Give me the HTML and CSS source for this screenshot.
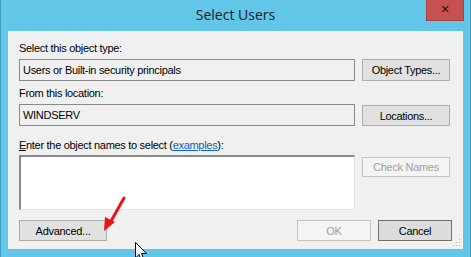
FILE: index.html
```html
<!DOCTYPE html>
<html lang="en">

<head>
    <meta charset="UTF-8">
    <title>Select Users</title>
    <link rel="stylesheet" href="styles.css">
</head>

<body>
    <div class="window">
        <div class="titlebar">
            <span class="title">Select Users</span>
            <button class="close">&#x2715;</button>
        </div>

        <div class="client">
            <div class="label">Select this object type:</div>
            <div class="row">
                <div class="field">Users or Built-in security principals</div>
                <button class="btn">Object Types...</button>
            </div>

            <div class="label gap-sm">From this location:</div>
            <div class="row">
                <div class="field">WINDSERV</div>
                <button class="btn btn-loc">Locations...</button>
            </div>

            <div class="label gap-lg"><u>E</u>nter the object names to select (<a href="#">examples</a>):</div>
            <div class="row">
                <textarea class="names"></textarea>
                <button class="btn btn-check" disabled>Check Names</button>
            </div>

            <div class="footer">
                <button class="btn btn-adv">Advanced...</button>
                <div class="footer-right">
                    <button class="btn btn-ok" disabled>OK</button>
                    <button class="btn btn-cancel">Cancel</button>
                </div>
            </div>

            <!-- size grip -->
            <svg class="grip" width="8" height="8" viewBox="0 0 8 8">
                <rect x="6" y="0" width="1" height="1" fill="#b5b5b5"/>
                <rect x="3" y="3" width="1" height="1" fill="#b5b5b5"/>
                <rect x="6" y="3" width="1" height="1" fill="#b5b5b5"/>
                <rect x="0" y="6" width="1" height="1" fill="#b5b5b5"/>
                <rect x="3" y="6" width="1" height="1" fill="#b5b5b5"/>
                <rect x="6" y="6" width="1" height="1" fill="#b5b5b5"/>
            </svg>
        </div>

        <!-- annotation arrow -->
        <svg class="arrow" width="30" height="40" viewBox="0 0 30 40">
            <line x1="24" y1="2" x2="10" y2="27" stroke="#e8141c" stroke-width="3" stroke-linecap="round"/>
            <polygon points="4,35 5,21 15,26" fill="#e8141c"/>
        </svg>

        <!-- mouse pointer -->
        <svg class="cursor" width="14" height="20" viewBox="0 0 14 20">
            <path d="M0.5 0.5 L0.5 16 L4 12.5 L6.5 18.5 L9 17.5 L6.5 11.5 L11.5 11.5 Z" fill="#fff" stroke="#000" stroke-width="1"/>
        </svg>
    </div>
</body>

</html>
```

FILE: styles.css
```css
body {
    margin: 0;
    background-color: #62c6e8;
    font-family: 'Liberation Sans', Arial, sans-serif;
    font-size: 11px;
    letter-spacing: -0.3px;
    color: #000;
}

.window {
    position: relative;
    width: 471px;
    height: 257px;
    box-sizing: border-box;
    background-color: #62c6e8;
    border-left: 1px solid #3f9dc2;
    border-right: 1px solid #3f9dc2;
    overflow: hidden;
}

.titlebar {
    height: 31px;
    display: flex;
    justify-content: center;
    align-items: center;
}

.title {
    font-family: 'Open Sans', 'Noto Sans', sans-serif;
    font-size: 14px;
    letter-spacing: 0;
    color: #1a1a1a;
    margin-top: -2px;
}

.close {
    position: absolute;
    top: 0;
    right: 6px;
    width: 38px;
    height: 21px;
    padding: 0;
    border: 1px solid #a8403e;
    border-top: none;
    background-color: #c75150;
    color: #111;
    font-family: 'DejaVu Sans', sans-serif;
    font-size: 11px;
    font-weight: bold;
    line-height: 20px;
}

.client {
    position: relative;
    margin: 0 7px;
    height: 218px;
    box-sizing: border-box;
    padding: 11px 11px 0 11px;
    background-color: #f0f0f0;
}

.label {
    height: 13px;
    line-height: 13px;
    margin-bottom: 4px;
}

.gap-sm {
    margin-top: 6px;
}

.gap-lg {
    margin-top: 13px;
    margin-bottom: 3px;
}

.label a {
    color: #0066cc;
}

.row {
    display: grid;
    grid-template-columns: 336px 88px;
    column-gap: 7px;
    align-items: start;
}

.field {
    height: 22px;
    line-height: 20px;
    box-sizing: border-box;
    padding-left: 3px;
    border: 1px solid #8a8a8a;
    background-color: #f0f0f0;
}

.names {
    display: block;
    height: 55px;
    margin: 0;
    box-sizing: border-box;
    resize: none;
    background-color: #fff;
    border: 1px solid #e3e3e3;
    border-top: 2px solid #8a8a8a;
    border-left: 2px solid #8a8a8a;
}

.btn {
    height: 22px;
    padding: 0;
    box-sizing: border-box;
    border: 1px solid #adadad;
    background-color: #e1e1e1;
    font-family: 'Liberation Sans', Arial, sans-serif;
    font-size: 11px;
    letter-spacing: -0.3px;
    color: #000;
}

.btn-loc {
    height: 21px;
    margin-top: 1px;
}

.btn-check {
    height: 20px;
    margin-top: 2px;
}

.btn:disabled {
    background-color: #f4f4f4;
    border-color: #c4c4c4;
    color: #a0a0a0;
}

.footer {
    display: flex;
    justify-content: space-between;
    margin-top: 10px;
}

.footer-right {
    display: flex;
    gap: 7px;
}

.btn-adv {
    width: 88px;
    height: 21px;
}

.btn-ok,
.btn-cancel {
    width: 74px;
    height: 21px;
}

.btn-cancel {
    border-color: #707070;
    background-color: #dcdcdc;
}

.grip {
    position: absolute;
    right: 2px;
    bottom: 2px;
}

.arrow {
    position: absolute;
    left: 99px;
    top: 196px;
}

.cursor {
    position: absolute;
    left: 134px;
    top: 242px;
}
```
